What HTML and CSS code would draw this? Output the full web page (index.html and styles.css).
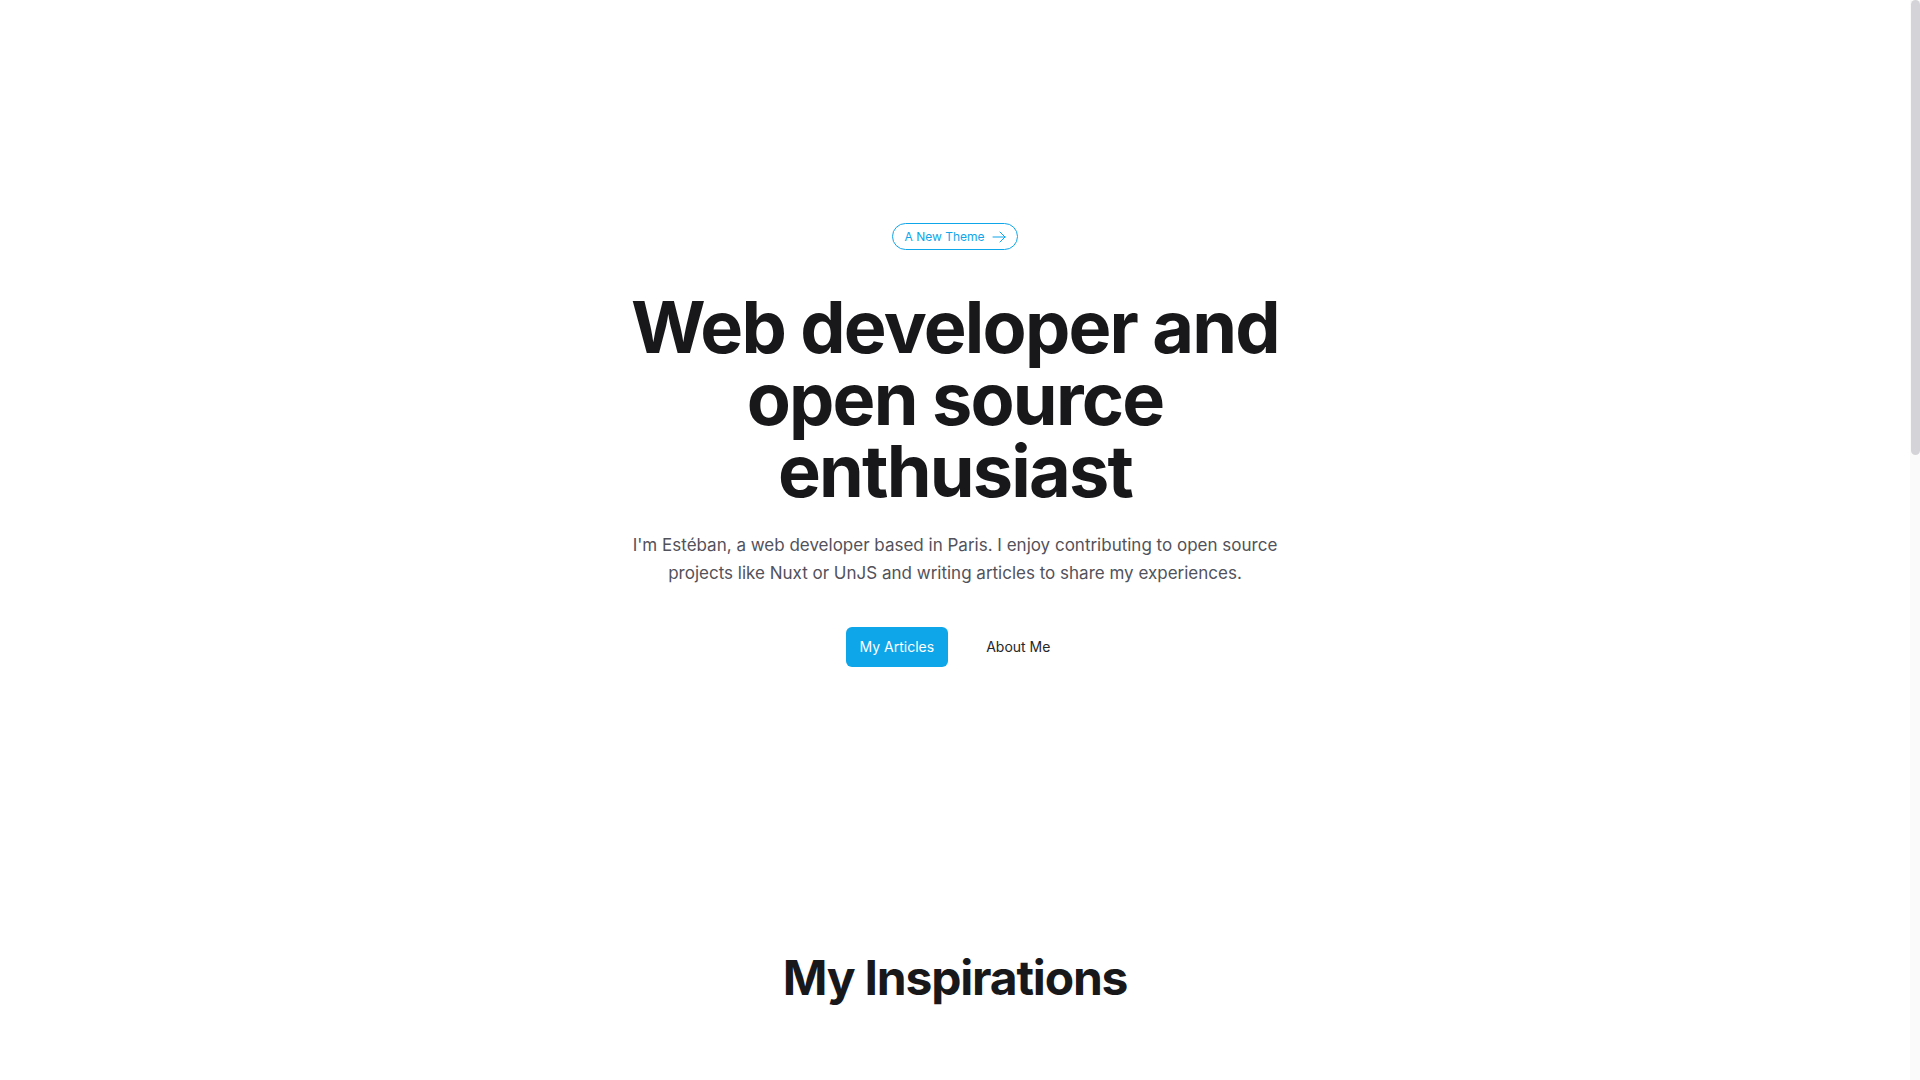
FILE: index.html
```html
<!DOCTYPE html>
<html lang="en">
<head>
<meta charset="utf-8">
<title>Estéban — Web developer</title>
<link rel="stylesheet" href="styles.css">
</head>
<body>
<div class="frame">
  <main class="page">
    <section class="hero">
      <a class="badge" href="#">
        <span>A New Theme</span>
        <svg class="badge-icon" viewBox="0 0 24 24" fill="none" stroke="currentColor" stroke-width="1.5" stroke-linecap="round" stroke-linejoin="round"><path d="M13.5 4.5 21 12m0 0-7.5 7.5M21 12H3"/></svg>
      </a>
      <h1 class="title">Web developer and open source enthusiast</h1>
      <p class="lead">I'm Estéban, a web developer based in Paris. I enjoy contributing to open source projects like Nuxt or UnJS and writing articles to share my experiences.</p>
      <div class="actions">
        <a class="btn btn-primary" href="#">My Articles</a>
        <a class="btn btn-ghost" href="#">About Me</a>
      </div>
    </section>
    <section class="inspirations">
      <h2 class="section-title">My Inspirations</h2>
      <div class="cards">
        <div class="card"></div>
        <div class="card"></div>
        <div class="card"></div>
      </div>
    </section>
  </main>
  <div class="scrollbar" aria-hidden="true"><div class="scroll-thumb"></div></div>
</div>
</body>
</html>
```
FILE: styles.css
```css
html {
  background: #ffffff;
}
body {
  margin: 0;
  font-family: Inter, "Noto Sans", sans-serif;
  color: #18181b;
  background: #ffffff;
}
.frame {
  display: flex;
  align-items: stretch;
}
.page {
  flex: 1;
  min-width: 0;
  display: flex;
  flex-direction: column;
  align-items: center;
}
.scrollbar {
  width: 10px;
  flex: none;
  background: #fafafa;
  display: flex;
  justify-content: flex-end;
  align-items: flex-start;
}
.scroll-thumb {
  width: 9px;
  height: 455px;
  border-radius: 5px;
  background: #d4d4d8;
}
.hero {
  width: 672px;
  padding-top: 223px;
  display: flex;
  flex-direction: column;
  align-items: center;
  text-align: center;
}
.badge {
  display: inline-flex;
  align-items: center;
  gap: 6px;
  height: 27px;
  box-sizing: border-box;
  padding: 0 10px 0 11px;
  border: 1px solid #0ea5e9;
  border-radius: 999px;
  color: #0ea5e9;
  font-size: 12px;
  line-height: 16px;
  font-weight: 400;
  text-decoration: none;
}
.badge-icon {
  width: 16px;
  height: 16px;
}
.title {
  margin: 41px 0 0;
  font-size: 72px;
  line-height: 72px;
  font-weight: 700;
  letter-spacing: -0.025em;
  color: #18181b;
}
.lead {
  margin: 24px 0 0;
  font-size: 17px;
  line-height: 28px;
  color: #52525b;
}
.actions {
  margin-top: 40px;
  display: flex;
  gap: 24px;
  align-items: center;
}
.btn {
  display: inline-flex;
  align-items: center;
  height: 40px;
  box-sizing: border-box;
  padding: 0 14px;
  border-radius: 6px;
  font-size: 14px;
  line-height: 20px;
  font-weight: 400;
  text-decoration: none;
}
.btn-primary {
  background: #0ea5e9;
  color: #ffffff;
}
.btn-ghost {
  color: #27272a;
}
.inspirations {
  width: 1280px;
  padding-top: 287px;
  padding-bottom: 400px;
  display: flex;
  flex-direction: column;
  align-items: center;
}
.section-title {
  margin: 0;
  font-size: 48px;
  line-height: 48px;
  font-weight: 700;
  letter-spacing: -0.025em;
  color: #18181b;
}
.cards {
  margin-top: 96px;
  width: 100%;
  display: grid;
  grid-template-columns: repeat(3, 1fr);
  gap: 32px;
}
.card {
  height: 480px;
  border-radius: 12px;
  background: #f4f4f5;
}
```
